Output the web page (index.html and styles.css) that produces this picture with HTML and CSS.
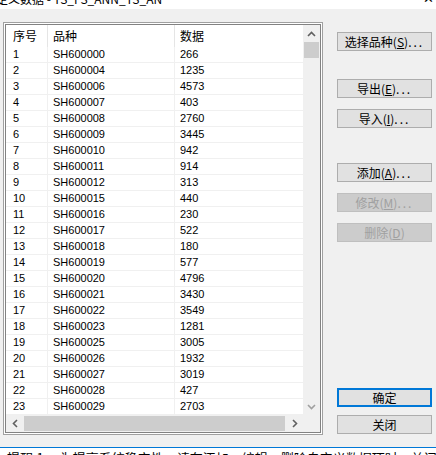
FILE: index.html
```html
<!DOCTYPE html>
<html lang="zh-CN">
<head>
    <meta charset="UTF-8">
    <title>自定义数据</title>
    <link rel="stylesheet" href="styles.css">
</head>
<body>
    <div class="titlebar">
        <span class="title">定义数据 - TS_FS_ANN_TS_AN</span>
        <span class="close">✕</span>
    </div>

    <div class="dialog">
        <div class="listbox">
            <div class="list-inner">
                <div class="list-view">
                    <div class="row header">
                        <span>序号</span><span>品种</span><span>数据</span>
                    </div>
                    <div class="row"><span>1</span><span>SH600000</span><span>266</span></div>
                    <div class="row"><span>2</span><span>SH600004</span><span>1235</span></div>
                    <div class="row"><span>3</span><span>SH600006</span><span>4573</span></div>
                    <div class="row"><span>4</span><span>SH600007</span><span>403</span></div>
                    <div class="row"><span>5</span><span>SH600008</span><span>2760</span></div>
                    <div class="row"><span>6</span><span>SH600009</span><span>3445</span></div>
                    <div class="row"><span>7</span><span>SH600010</span><span>942</span></div>
                    <div class="row"><span>8</span><span>SH600011</span><span>914</span></div>
                    <div class="row"><span>9</span><span>SH600012</span><span>313</span></div>
                    <div class="row"><span>10</span><span>SH600015</span><span>440</span></div>
                    <div class="row"><span>11</span><span>SH600016</span><span>230</span></div>
                    <div class="row"><span>12</span><span>SH600017</span><span>522</span></div>
                    <div class="row"><span>13</span><span>SH600018</span><span>180</span></div>
                    <div class="row"><span>14</span><span>SH600019</span><span>577</span></div>
                    <div class="row"><span>15</span><span>SH600020</span><span>4796</span></div>
                    <div class="row"><span>16</span><span>SH600021</span><span>3430</span></div>
                    <div class="row"><span>17</span><span>SH600022</span><span>3549</span></div>
                    <div class="row"><span>18</span><span>SH600023</span><span>1281</span></div>
                    <div class="row"><span>19</span><span>SH600025</span><span>3005</span></div>
                    <div class="row"><span>20</span><span>SH600026</span><span>1932</span></div>
                    <div class="row"><span>21</span><span>SH600027</span><span>3019</span></div>
                    <div class="row"><span>22</span><span>SH600028</span><span>427</span></div>
                    <div class="row"><span>23</span><span>SH600029</span><span>2703</span></div>
                </div>

                <div class="vscroll">
                    <div class="arrow">
                        <svg width="9" height="6" viewBox="0 0 9 6"><polyline points="1,5 4.5,1.5 8,5" fill="none" stroke="#606060" stroke-width="1.6"/></svg>
                    </div>
                    <div class="vthumb"></div>
                    <div class="vtrack"></div>
                    <div class="arrow">
                        <svg width="9" height="6" viewBox="0 0 9 6"><polyline points="1,1 4.5,4.5 8,1" fill="none" stroke="#a0a0a0" stroke-width="1.6"/></svg>
                    </div>
                </div>

                <div class="hscroll">
                    <div class="arrow">
                        <svg width="6" height="9" viewBox="0 0 6 9"><polyline points="5,1 1.5,4.5 5,8" fill="none" stroke="#606060" stroke-width="1.6"/></svg>
                    </div>
                    <div class="hthumb"></div>
                    <div class="arrow">
                        <svg width="6" height="9" viewBox="0 0 6 9"><polyline points="1,1 4.5,4.5 1,8" fill="none" stroke="#606060" stroke-width="1.6"/></svg>
                    </div>
                </div>
                <div class="corner"></div>
            </div>
        </div>

        <div class="buttons">
            <button class="btn">选择品种(<u>S</u>)<span class="dots">...</span></button>
            <button class="btn group">导出(<u>E</u>)<span class="dots">...</span></button>
            <button class="btn near">导入(<u>I</u>)<span class="dots">...</span></button>
            <button class="btn group2">添加(<u>A</u>)<span class="dots">...</span></button>
            <button class="btn near" disabled>修改(<u>M</u>)<span class="dots">...</span></button>
            <button class="btn near" disabled>删除(<u>D</u>)</button>
            <button class="btn default">确定</button>
            <button class="btn close-btn">关闭</button>
        </div>
    </div>

    <div class="tip">提醒:1、 为提高系统稳定性，请在添加、编辑、删除自定义数据项时，关闭行情接收</div>
</body>
</html>
```

FILE: styles.css
```css
/* Window */
* {
    box-sizing: border-box;
}
body {
    margin: 0;
    background-color: #f0f0f0;
    font-family: "Noto Sans CJK SC", "Liberation Sans", sans-serif;
    font-size: 12px;
    color: #000;
    overflow: hidden;
}
.titlebar {
    height: 9px;
    background-color: #fff;
    overflow: hidden;
    display: flex;
    justify-content: space-between;
}
.title {
    margin-top: -8px;
    margin-left: -4px;
    line-height: 14px;
    font-size: 12px;
}
.close {
    margin-top: -9px;
    margin-right: 2px;
    font-size: 13px;
    line-height: 14px;
}
.dialog {
    height: 438px;
    display: flex;
    align-items: flex-start;
}

/* List box */
.listbox {
    margin: 13px 0 0 3px;
    border: 1px solid #a0a0a0;
    padding: 1px;
    background-color: #fff;
}
.list-inner {
    border: 1px solid #828282;
    display: grid;
    grid-template-columns: 297px 17px;
    grid-template-rows: 390px 17px;
    background-color: #fff;
}
.list-view {
    overflow: hidden;
}
.row {
    display: grid;
    grid-template-columns: 42px 127px 128px;
    height: 16px;
    font-family: "Liberation Sans", "Noto Sans CJK SC", sans-serif;
    font-size: 11px;
    line-height: 15px;
}
.row span {
    border-bottom: 1px solid #f0f0f0;
    border-right: 1px solid #f0f0f0;
    padding-left: 5px;
    white-space: nowrap;
}
.row span:first-child {
    padding-left: 7px;
}
.row span:last-child {
    border-right: none;
}
.header {
    height: 22px;
    font-family: "Noto Sans CJK SC", sans-serif;
    font-size: 12px;
    line-height: 22px;
}
.header span {
    border-bottom: none;
    border-right-color: #e5e5e5;
}

/* Scrollbars */
.vscroll {
    background-color: #f0f0f0;
    display: flex;
    flex-direction: column;
}
.vscroll .arrow {
    height: 17px;
}
.vthumb {
    height: 16px;
    margin: 0 1px;
    background-color: #cdcdcd;
}
.vtrack {
    flex: 1;
}
.hscroll {
    background-color: #f0f0f0;
    display: flex;
}
.hscroll .arrow {
    width: 17px;
}
.hthumb {
    width: 261px;
    margin: 1px 1px;
    background-color: #cdcdcd;
}
.arrow {
    display: flex;
    align-items: center;
    justify-content: center;
}
.corner {
    background-color: #f0f0f0;
}

/* Buttons */
.buttons {
    margin: 23px 0 0 14px;
    display: flex;
    flex-direction: column;
}
.btn {
    width: 95px;
    height: 19px;
    padding: 0;
    border: 1px solid #adadad;
    background-color: #e1e1e1;
    font-family: "Noto Sans CJK SC", sans-serif;
    font-size: 12px;
    line-height: 16px;
    color: #000;
}
.dots {
    letter-spacing: 2px;
}
.btn:disabled {
    background-color: #cccccc;
    border-color: #bfbfbf;
    color: #a0a0a0;
}
.group {
    margin-top: 28px;
}
.near {
    margin-top: 11px;
}
.group2 {
    margin-top: 35px;
}
.default {
    margin-top: 146px;
    border: 2px solid #0078d7;
}
.close-btn {
    margin-top: 8px;
}

/* Tip */
.tip {
    border-top: 1px solid #0078d7;
    background-color: #fff;
    height: 20px;
    padding-left: 7px;
    font-size: 13px;
    line-height: 20px;
    white-space: nowrap;
    overflow: hidden;
}
```
